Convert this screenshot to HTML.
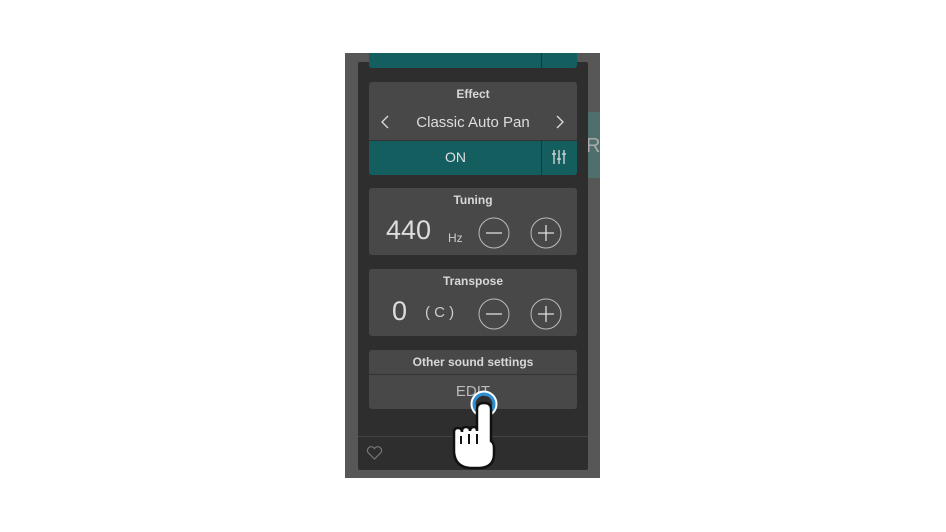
<!DOCTYPE html><html><head><style>
body{margin:0;width:946px;height:532px;background:#fff;position:relative;overflow:hidden;font-family:"Liberation Sans",sans-serif}
div{position:absolute;box-sizing:border-box}
.c{background:#484848;border-radius:3px;left:369px;width:208px}
.t{color:#d8d8d8;font-weight:bold;font-size:12px;width:100%;text-align:center}
svg{position:absolute}
</style></head><body>
<div style="left:345px;top:53px;width:255px;height:425px;background:#575757"></div>
<div style="left:588px;top:112px;width:12px;height:66px;background:#4f6f6d"></div>
<div style="left:586px;top:135px;color:#aaa;font-size:20px">R</div>
<div style="left:358px;top:62px;width:230px;height:408px;background:#2e2e2e;border-radius:2px"></div>
<div style="left:369px;top:53px;width:208px;height:15px;background:#155e60;border-radius:0 0 3px 3px"></div>
<div style="left:541px;top:53px;width:1px;height:15px;background:#2e2e2e"></div>
<div class="c" style="top:82px;height:93px;overflow:hidden">
<div class="t" style="top:5px">Effect</div>
<svg style="left:12px;top:33px" width="8" height="14"><path d="M7 1 L1 7 L7 13" fill="none" stroke="#ddd" stroke-width="1.3"/></svg>
<div style="top:32px;width:100%;text-align:center;color:#ddd;font-size:15px">Classic Auto Pan</div>
<svg style="left:187px;top:33px" width="8" height="14"><path d="M1 1 L7 7 L1 13" fill="none" stroke="#ddd" stroke-width="1.3"/></svg>
<div style="top:58px;left:0;width:208px;height:35px;background:#155e60;border-top:1px solid #333"></div>
<div style="top:67px;left:0;width:173px;text-align:center;color:#e0e0e0;font-size:14px">ON</div>
<div style="top:59px;left:172px;width:1px;height:34px;background:#2e2e2e"></div>
<svg style="left:182px;top:68px" width="16" height="14"><g stroke="#ddd" stroke-width="1.3" fill="none"><path d="M3 0v14M8 0v14M13 0v14"/><path d="M1 4h4M6 9h4M11 4h4"/></g></svg>
</div>
<div class="c" style="top:188px;height:67px">
<div class="t" style="top:5px">Tuning</div>
<div style="top:27px;left:17px;color:#ddd;font-size:27px">440</div>
<div style="top:43px;left:79px;color:#ccc;font-size:12px">Hz</div>
<svg style="left:108px;top:28px" width="34" height="34"><circle cx="17" cy="17" r="15" fill="none" stroke="#bbb" stroke-width="1"/><path d="M9 17h16" stroke="#ddd" stroke-width="1.3"/></svg>
<svg style="left:160px;top:28px" width="34" height="34"><circle cx="17" cy="17" r="15" fill="none" stroke="#bbb" stroke-width="1"/><path d="M9 17h16M17 9v16" stroke="#ddd" stroke-width="1.3"/></svg>
</div>
<div class="c" style="top:269px;height:67px">
<div class="t" style="top:5px">Transpose</div>
<div style="top:27px;left:23px;color:#ddd;font-size:27px">0</div>
<div style="top:35px;left:56px;color:#ccc;font-size:15px">( C )</div>
<svg style="left:108px;top:28px" width="34" height="34"><circle cx="17" cy="17" r="15" fill="none" stroke="#bbb" stroke-width="1"/><path d="M9 17h16" stroke="#ddd" stroke-width="1.3"/></svg>
<svg style="left:160px;top:28px" width="34" height="34"><circle cx="17" cy="17" r="15" fill="none" stroke="#bbb" stroke-width="1"/><path d="M9 17h16M17 9v16" stroke="#ddd" stroke-width="1.3"/></svg>
</div>
<div class="c" style="top:350px;height:59px">
<div class="t" style="top:5px">Other sound settings</div>
<div style="top:24px;left:0;width:208px;height:1px;background:#333"></div>
<div style="top:33px;width:100%;text-align:center;color:#bbb;font-size:15px">EDIT</div>
</div>
<div style="left:358px;top:436px;width:230px;height:1px;background:#444"></div>
<svg style="left:366px;top:446px" width="17" height="14"><path d="M8.5 13 L2 6.5 A3.3 3.3 0 0 1 8.5 2.5 A3.3 3.3 0 0 1 15 6.5 Z" fill="none" stroke="#777" stroke-width="1.2"/></svg>
<svg style="left:440px;top:388px" width="70" height="84" viewBox="0 0 70 84">
<circle cx="44" cy="16" r="12" fill="none" stroke="#fff" stroke-width="3"/>
<circle cx="44" cy="16" r="10" fill="none" stroke="#2a8fd6" stroke-width="3"/>
<circle cx="44" cy="16" r="8" fill="#2e2e2e"/>
<path d="M37 21 q0-6 7-6 q7 0 7 6 v32 q3 2 3 7 v6 q0 13-14 14 h-10 q-15-1-16-16 v-20 q0-4 4-4 q4 0 4 4 v-1 q0-4 4-4 q4 0 4 4 q0-4 4-4 q3 0 3 4 z" fill="#fff" stroke="#111" stroke-width="2.5"/>
<path d="M21 48v8M29 46v10M37 46v10" stroke="#111" stroke-width="2"/>
</svg>
</body></html>
